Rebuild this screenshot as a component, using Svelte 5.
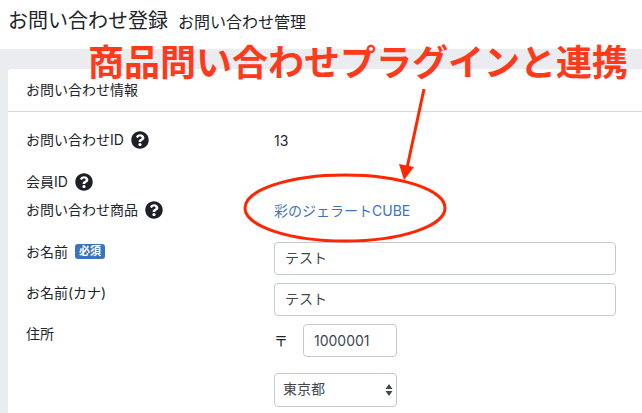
<script>
  let name = $state('テスト');
  let kana = $state('テスト');
  let postalCode = $state('1000001');
  let pref = $state('東京都');

  const prefs = ['北海道', '東京都', '大阪府', '福岡県'];
</script>

{#snippet help(label)}
  <button class="help" type="button" aria-label={label}>
    <svg viewBox="0 0 512 512" aria-hidden="true">
      <path d="M504 256c0 137-111 248-248 248S8 393 8 256C8 119 119 8 256 8s248 111 248 248zM262.700 90c-54.500 0-89.300 23-116.500 63.800-3.500 5.300-2.400 12.400 2.700 16.300l34.700 26.300c5.200 3.900 12.600 3 16.700-2.100 17.900-22.700 30.100-35.800 57.300-35.800 20.400 0 45.700 13.100 45.700 33 0 15-12.400 22.700-32.500 34C247.100 238.500 216 255 216 296v4c0 6.600 5.400 12 12 12h56c6.600 0 12-5.400 12-12v-1.300c0-28.700 83.800-29.900 83.800-107.500C379.800 132.700 319.200 90 262.700 90zM256 338c-25.400 0-46 20.600-46 46s20.600 46 46 46 46-20.600 46-46-20.600-46-46-46z" />
    </svg>
  </button>
{/snippet}

<div class="page">
  <header class="page-header">
    <h1>お問い合わせ登録</h1>
    <span class="sub-title">お問い合わせ管理</span>
  </header>

  <main>
    <section class="card">
      <h2 class="card-header">お問い合わせ情報</h2>

      <form class="card-body">
        <div class="row row-wide">
          <div class="label">お問い合わせID {@render help('お問い合わせIDについて')}</div>
          <div class="value">13</div>
        </div>
        <div class="row row-tight">
          <div class="label">会員ID {@render help('会員IDについて')}</div>
          <div class="value"></div>
        </div>
        <div class="row row-wide">
          <div class="label">お問い合わせ商品 {@render help('お問い合わせ商品について')}</div>
          <div class="value"><a href="#product">彩のジェラートCUBE</a></div>
        </div>
        <div class="row">
          <label class="label" for="name">お名前 <span class="badge">必須</span></label>
          <div class="value"><input id="name" class="control" type="text" bind:value={name} /></div>
        </div>
        <div class="row">
          <label class="label" for="kana">お名前(カナ)</label>
          <div class="value"><input id="kana" class="control" type="text" bind:value={kana} /></div>
        </div>
        <div class="row">
          <label class="label" for="postal">住所</label>
          <div class="value address">
            <div class="postal">
              <span>〒</span>
              <input id="postal" class="control" type="text" bind:value={postalCode} />
            </div>
            <div class="select-wrap">
              <select class="control" aria-label="都道府県" bind:value={pref}>
                {#each prefs as item}
                  <option value={item}>{item}</option>
                {/each}
              </select>
              <svg class="caret" viewBox="0 0 8 14" aria-hidden="true">
                <path d="M4 1 7.500 6H.5zM4 13 .5 8h7z" />
              </svg>
            </div>
          </div>
        </div>
      </form>
    </section>
  </main>

  <!-- Callout over the linked product -->
  <p class="callout">商品問い合わせプラグインと連携</p>
  <svg class="marker" width="204" height="158" viewBox="0 0 204 158" aria-hidden="true">
    <ellipse cx="102" cy="120" rx="100" ry="33" />
    <path class="shaft" d="M181 1 164 80" />
    <path class="head" d="M161 92 156 76 171 79z" />
  </svg>
</div>

<style>
  :global(body) {
    margin: 0;
    background: #ebecf0;
  }

  .page {
    position: relative;
    display: flex;
    flex-direction: column;
    min-height: 100vh;
    font-family: Inter, 'Noto Sans CJK JP', sans-serif;
    font-size: 14px;
    line-height: 21px;
    color: #212529;
  }

  .page-header {
    display: flex;
    align-items: baseline;
    gap: 10px;
    padding: 6px 8px 13px;
    background: #fff;
  }

  h1 {
    margin: 0;
    font-size: 20px;
    font-weight: 400;
    line-height: 30px;
  }

  .sub-title {
    font-size: 16px;
  }

  main {
    display: flex;
    flex: 1;
    padding: 20px 0 0 8px;
  }

  .card {
    flex: 1;
    background: #fff;
    border-top-left-radius: 3px;
  }

  .card-header {
    margin: 0;
    padding: 10px 18px 11px;
    border-bottom: 1px solid #d9dadc;
    font-size: 14px;
    font-weight: 400;
  }

  .card-body {
    padding: 18px 26px 6px 18px;
  }

  .row {
    display: flex;
    min-height: 21px;
    margin-bottom: 8px;
  }

  .row:last-child {
    margin-bottom: 0;
  }

  .row-wide {
    margin-bottom: 21px;
  }

  .row-tight {
    margin-bottom: 7px;
  }

  .label {
    display: flex;
    flex: 0 0 248px;
    align-items: center;
    align-self: flex-start;
    gap: 7px;
    height: 19px;
  }

  .value {
    flex: 1;
    min-width: 0;
  }

  .help {
    width: 18px;
    height: 18px;
    padding: 0;
    border: 0;
    background: none;
    cursor: pointer;
  }

  .help svg {
    display: block;
    width: 18px;
    height: 18px;
    fill: #1d2127;
  }

  .badge {
    padding: 0 4px;
    border-radius: 3px;
    background: #3d72bd;
    color: #fff;
    font-size: 11px;
    font-weight: 700;
    line-height: 15px;
  }

  a {
    color: #3d72bd;
    text-decoration: none;
  }

  .control {
    display: block;
    box-sizing: border-box;
    width: 100%;
    height: 33px;
    padding: 0 10px 3px;
    border: 1px solid #c3cad4;
    border-radius: 4px;
    background: #fff;
    color: #41474e;
    font: inherit;
  }

  .address {
    display: flex;
    flex-direction: column;
    gap: 16px;
  }

  .postal {
    display: flex;
    align-items: center;
    gap: 15px;
  }

  .postal .control {
    width: 94px;
    padding-bottom: 0;
  }

  .select-wrap {
    position: relative;
    width: 123px;
  }

  select.control {
    height: 34px;
    padding: 0 24px 3px 8px;
    appearance: none;
  }

  .caret {
    position: absolute;
    top: 10px;
    right: 4px;
    width: 8px;
    height: 14px;
    fill: #41474e;
    pointer-events: none;
  }

  .callout {
    position: absolute;
    top: 42px;
    left: 88px;
    margin: 0;
    color: #ff3a1a;
    font-size: 36px;
    font-weight: 700;
    line-height: 42px;
    white-space: nowrap;
  }

  .marker {
    position: absolute;
    top: 88px;
    left: 243px;
    fill: none;
    stroke: #ff2600;
    stroke-width: 3;
    pointer-events: none;
  }

  .marker .head {
    fill: #ff2600;
    stroke: none;
  }
</style>
